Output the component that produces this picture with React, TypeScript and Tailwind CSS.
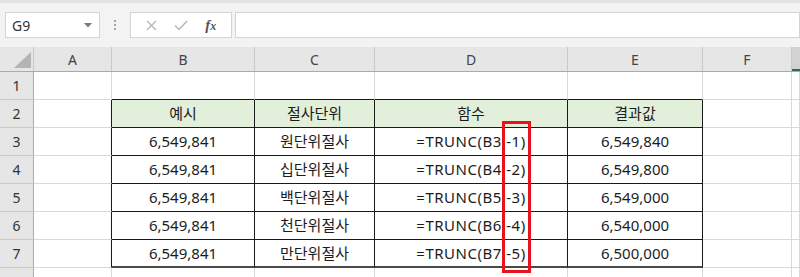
import React from "react";

const colWidths = [
  "w-[78px]",
  "w-[143px]",
  "w-[120px]",
  "w-[193px]",
  "w-[135px]",
  "w-[89px]",
  "w-[8px]",
];
const letters = ["A", "B", "C", "D", "E", "F", "G"];

const tableRows: string[][] = [
  ["6,549,841", "원단위절사", "=TRUNC(B3,-1)", "6,549,840"],
  ["6,549,841", "십단위절사", "=TRUNC(B4,-2)", "6,549,800"],
  ["6,549,841", "백단위절사", "=TRUNC(B5,-3)", "6,549,000"],
  ["6,549,841", "천단위절사", "=TRUNC(B6,-4)", "6,540,000"],
  ["6,549,841", "만단위절사", "=TRUNC(B7,-5)", "6,500,000"],
];
const headers = ["예시", "절사단위", "함수", "결과값"];

const font = { fontFamily: '"Noto Sans", "Noto Sans CJK KR", sans-serif' };

function Cell({ row, col, text }: { row: number; col: number; text?: string }) {
  const inTable = row >= 2 && row <= 7 && col >= 1 && col <= 4;
  let right = "border-r-[#d9d9d9]";
  let bottom = "border-b-[#d9d9d9]";
  if (inTable) {
    right = "border-r-[#1a1a1a]";
    bottom = row === 7 ? "border-b-[#4a4a4a]" : "border-b-[#1a1a1a]";
  }
  if (col === 0 && row >= 2 && row <= 7) right = "border-r-[#1a1a1a]";
  if (row === 1 && col >= 1 && col <= 4) bottom = "border-b-[#1a1a1a]";
  const bg = row === 2 && inTable ? "bg-[#e2efda]" : "bg-white";
  const thick = inTable && row === 7 ? "border-b-2" : "border-b";
  const isFormula = col === 3 && row >= 3;
  return (
    <div
      className={`${colWidths[col]} shrink-0 h-full border-r ${thick} ${right} ${bottom} ${bg} flex items-center justify-center text-[15px] text-[#1c1c1c] whitespace-nowrap overflow-hidden ${
        isFormula ? "tracking-[0.5px]" : ""
      }`}
    >
      {text}
    </div>
  );
}

function RowHead({ n }: { n: number }) {
  return (
    <div className="w-[34px] shrink-0 h-full bg-[#e6e6e6] border-r border-r-[#ababab] border-b border-b-[#c9c9c9] flex items-center justify-center text-[14px] text-[#333]">
      {n < 8 ? n : ""}
    </div>
  );
}

export default function App() {
  const rows: { n: number; cells: string[] }[] = [
    { n: 1, cells: [] },
    { n: 2, cells: headers },
    ...tableRows.map((r, i) => ({ n: i + 3, cells: r })),
    { n: 8, cells: [] },
  ];

  return (
    <div className="w-[800px] h-[277px] overflow-hidden bg-white relative" style={font}>
      {/* toolbar */}
      <div className="h-[47px] bg-[#f3f3f3] border-t-[3px] border-t-[#e3e3e3] flex items-start pt-[9px]">
        <div className="ml-[5px] w-[95px] h-[26px] bg-white border border-[#d4d4d4] flex items-center pl-[6px] pr-[7px] justify-between">
          <span className="text-[14px] text-[#333]">G9</span>
          <svg width="8" height="5" viewBox="0 0 8 5">
            <path d="M0 0 L8 0 L4 4.5 Z" fill="#7a7a7a" />
          </svg>
        </div>
        <div className="w-[30px] h-[26px] flex flex-col items-center justify-center gap-[2px]">
          <span className="w-[2px] h-[2px] bg-[#a6a6a6]" />
          <span className="w-[2px] h-[2px] bg-[#a6a6a6]" />
          <span className="w-[2px] h-[2px] bg-[#a6a6a6]" />
        </div>
        <div className="w-[102px] h-[26px] bg-white border border-[#d4d4d4] flex items-center justify-around px-[6px]">
          <svg width="11" height="11" viewBox="0 0 11 11">
            <path d="M1 1 L10 10 M10 1 L1 10" stroke="#b5b5b5" strokeWidth="1.3" />
          </svg>
          <svg width="14" height="11" viewBox="0 0 14 11">
            <path d="M1 5.5 L5 9.5 L13 1" stroke="#b5b5b5" strokeWidth="1.5" fill="none" />
          </svg>
          <span
            className="text-[15px] italic font-bold text-[#555] leading-none"
            style={{ fontFamily: '"Liberation Serif", serif' }}
          >
            f<span className="text-[12px]">x</span>
          </span>
        </div>
        <div className="ml-[3px] flex-1 h-[26px] bg-white border border-[#d4d4d4]" />
      </div>

      {/* column headers */}
      <div className="h-[25px] flex bg-[#e6e6e6] border-b border-b-[#ababab]">
        <div className="w-[34px] shrink-0 h-full border-r border-r-[#c9c9c9] flex items-end justify-end pr-[2px] pb-[3px]">
          <svg width="17" height="16" viewBox="0 0 17 16">
            <path d="M17 0 L17 16 L0 16 Z" fill="#b4b4b4" />
          </svg>
        </div>
        {letters.map((l, i) => (
          <div
            key={l}
            className={`${colWidths[i]} shrink-0 h-full flex items-center justify-center text-[14px] text-[#444] ${
              i === 6 ? "bg-[#d2d2d2] border-b-2 border-b-[#217346]" : "border-r border-r-[#c9c9c9]"
            }`}
          >
            {i === 6 ? "" : l}
          </div>
        ))}
      </div>

      {/* rows */}
      {rows.map((r) => (
        <div key={r.n} className="h-[28px] flex">
          <RowHead n={r.n} />
          {letters.map((_, c) => (
            <Cell
              key={c}
              row={r.n}
              col={c}
              text={c >= 1 && c <= 4 ? r.cells[c - 1] : undefined}
            />
          ))}
        </div>
      ))}

      {/* red highlight */}
      <div className="absolute left-[502px] top-[121px] w-[29px] h-[152px] border-[3px] border-[#e8141b]" />
    </div>
  );
}
